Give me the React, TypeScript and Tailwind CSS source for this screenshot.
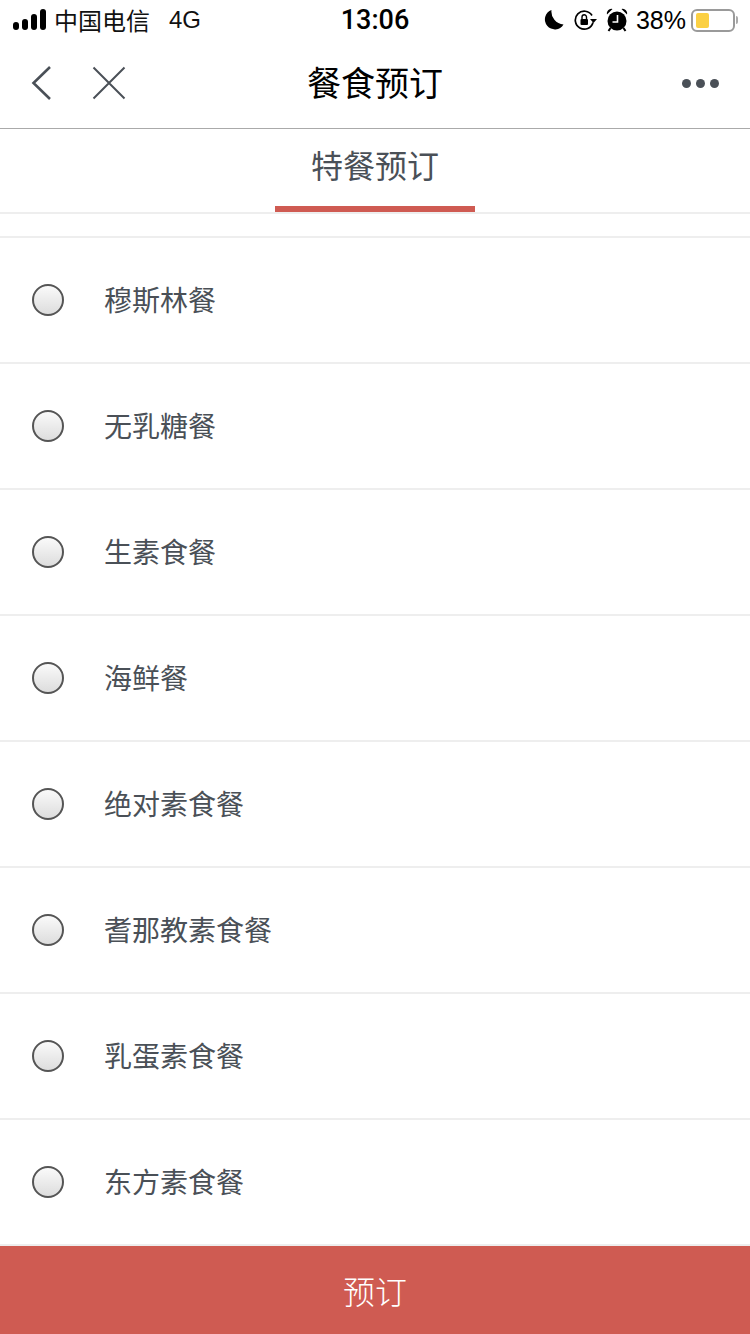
const font = { fontFamily: '"Noto Sans CJK SC", sans-serif' };
const latin = { fontFamily: '"Liberation Sans", sans-serif' };
const items = ["穆斯林餐", "无乳糖餐", "生素食餐", "海鲜餐", "绝对素食餐", "耆那教素食餐", "乳蛋素食餐", "东方素食餐"];

function Signal() {
  return (
    <svg width="34" height="22" viewBox="0 0 34 22" fill="#000">
      <rect x="0" y="13" width="6" height="8" rx="3" />
      <rect x="9" y="10" width="6" height="11" rx="3" />
      <rect x="18" y="5" width="6" height="16" rx="3" />
      <rect x="27" y="0" width="6" height="21" rx="3" />
    </svg>
  );
}

function Moon() {
  return (
    <svg width="22" height="22" viewBox="0 0 22 22">
      <path d="M8.5 1 A10 10 0 1 0 20.5 15.5 A13 13 0 0 1 8.5 1 Z" fill="#000" />
    </svg>
  );
}

function RotationLock() {
  return (
    <svg width="24" height="22" viewBox="0 0 24 22" fill="none">
      <path d="M19 13.5 A9 9 0 1 1 18 6.5" stroke="#000" strokeWidth="1.7" />
      <path d="M16 10 L23 10 L19.5 14 Z" fill="#000" />
      <rect x="6.5" y="10" width="7.5" height="6" rx="1" fill="#000" />
      <path d="M8 10.5 V8 A2.2 2.2 0 0 1 12.5 8 V10.5" stroke="#000" strokeWidth="1.4" />
    </svg>
  );
}

function Alarm() {
  return (
    <svg width="22" height="24" viewBox="0 0 22 24" fill="none">
      <circle cx="11" cy="13" r="9.5" fill="#000" />
      <path d="M1 6.5 A4.5 4.5 0 0 1 6.5 1 Z M21 6.5 A4.5 4.5 0 0 0 15.5 1 Z" fill="#000" />
      <path d="M4.5 20 L2.5 23 M17.5 20 L19.5 23" stroke="#000" strokeWidth="2" />
      <path d="M11.5 7 V14 H6.5" stroke="#fff" strokeWidth="1.6" />
    </svg>
  );
}

function Back() {
  return (
    <svg width="24" height="34" viewBox="0 0 24 34" fill="none">
      <path d="M21 1 L4.5 17 L21 33" stroke="#4a5057" strokeWidth="2.6" />
    </svg>
  );
}

function Close() {
  return (
    <svg width="34" height="34" viewBox="0 0 34 34" fill="none">
      <path d="M1.5 1.5 L32.5 32.5 M32.5 1.5 L1.5 32.5" stroke="#4a5057" strokeWidth="2" />
    </svg>
  );
}

export default function App() {
  return (
    <div className="w-[750px] h-[1334px] bg-white flex flex-col overflow-hidden" style={font}>
      <div className="h-10 shrink-0 flex items-center justify-between relative pl-[13px] pr-[12px] text-black">
        <div className="flex items-center">
          <Signal />
          <span className="ml-[7px] text-[24px] leading-10 text-[#111]">中国电信</span>
          <span className="ml-[19px] text-[24px] leading-10 text-[#111]" style={latin}>4G</span>
        </div>
        <div className="absolute left-0 right-0 text-center text-[27px] leading-10 font-medium" style={{ fontFamily: 'Roboto, sans-serif' }}>13:06</div>
        <div className="flex items-center relative">
          <Moon />
          <span className="ml-[9px] flex"><RotationLock /></span>
          <span className="ml-[8px] flex"><Alarm /></span>
          <span className="ml-[8px] text-[25px] leading-10" style={latin}>38%</span>
          <div className="ml-[5px] w-[44px] h-[23px] rounded-[6px] border-2 border-[#9a9a9a] py-[2px] px-[3px]">
            <div className="w-[13px] h-[15px] rounded-[2px] bg-[#fbd043]" />
          </div>
          <div className="ml-[1px] w-[2px] h-[8px] bg-[#aaa] rounded-r" />
        </div>
      </div>

      <div className="h-[89px] shrink-0 flex items-center justify-between relative border-b border-[#aaaaaa] pl-[29px] pr-[31px] pb-[2px]">
        <div className="flex items-center">
          <Back />
          <span className="ml-[39px] flex"><Close /></span>
        </div>
        <div className="absolute left-0 right-0 top-0 text-center text-[34px] text-black leading-[84px]">餐食预订</div>
        <div className="flex gap-[5px]">
          <span className="w-[9px] h-[9px] rounded-full bg-[#4a5057]" />
          <span className="w-[9px] h-[9px] rounded-full bg-[#4a5057]" />
          <span className="w-[9px] h-[9px] rounded-full bg-[#4a5057]" />
        </div>
      </div>

      <div className="h-[85px] shrink-0 border-b-2 border-[#eeeeee] flex justify-center">
        <div className="w-[200px] h-[83px] border-b-[6px] border-[#cf5b52] text-center text-[32px] leading-[70px] text-[#4a5057]">特餐预订</div>
      </div>

      <div className="h-[24px] shrink-0 border-b-2 border-[#eeeeee]" />

      <div className="flex flex-col">
        {items.map((t) => (
          <div key={t} className="h-[126px] shrink-0 border-b-2 border-[#eeeeee] flex items-center pl-8">
            <span className="w-8 h-8 rounded-full border-2 border-[#555555] bg-gradient-to-b from-[#fafafa] to-[#dddddd]" />
            <span className="ml-10 text-[28px] leading-[38px] pb-[2px] text-[#4a5057]">{t}</span>
          </div>
        ))}
      </div>

      <div className="h-[88px] shrink-0 bg-[#cf5b52] flex items-center justify-center text-[32px] font-light text-white">预订</div>
    </div>
  );
}
